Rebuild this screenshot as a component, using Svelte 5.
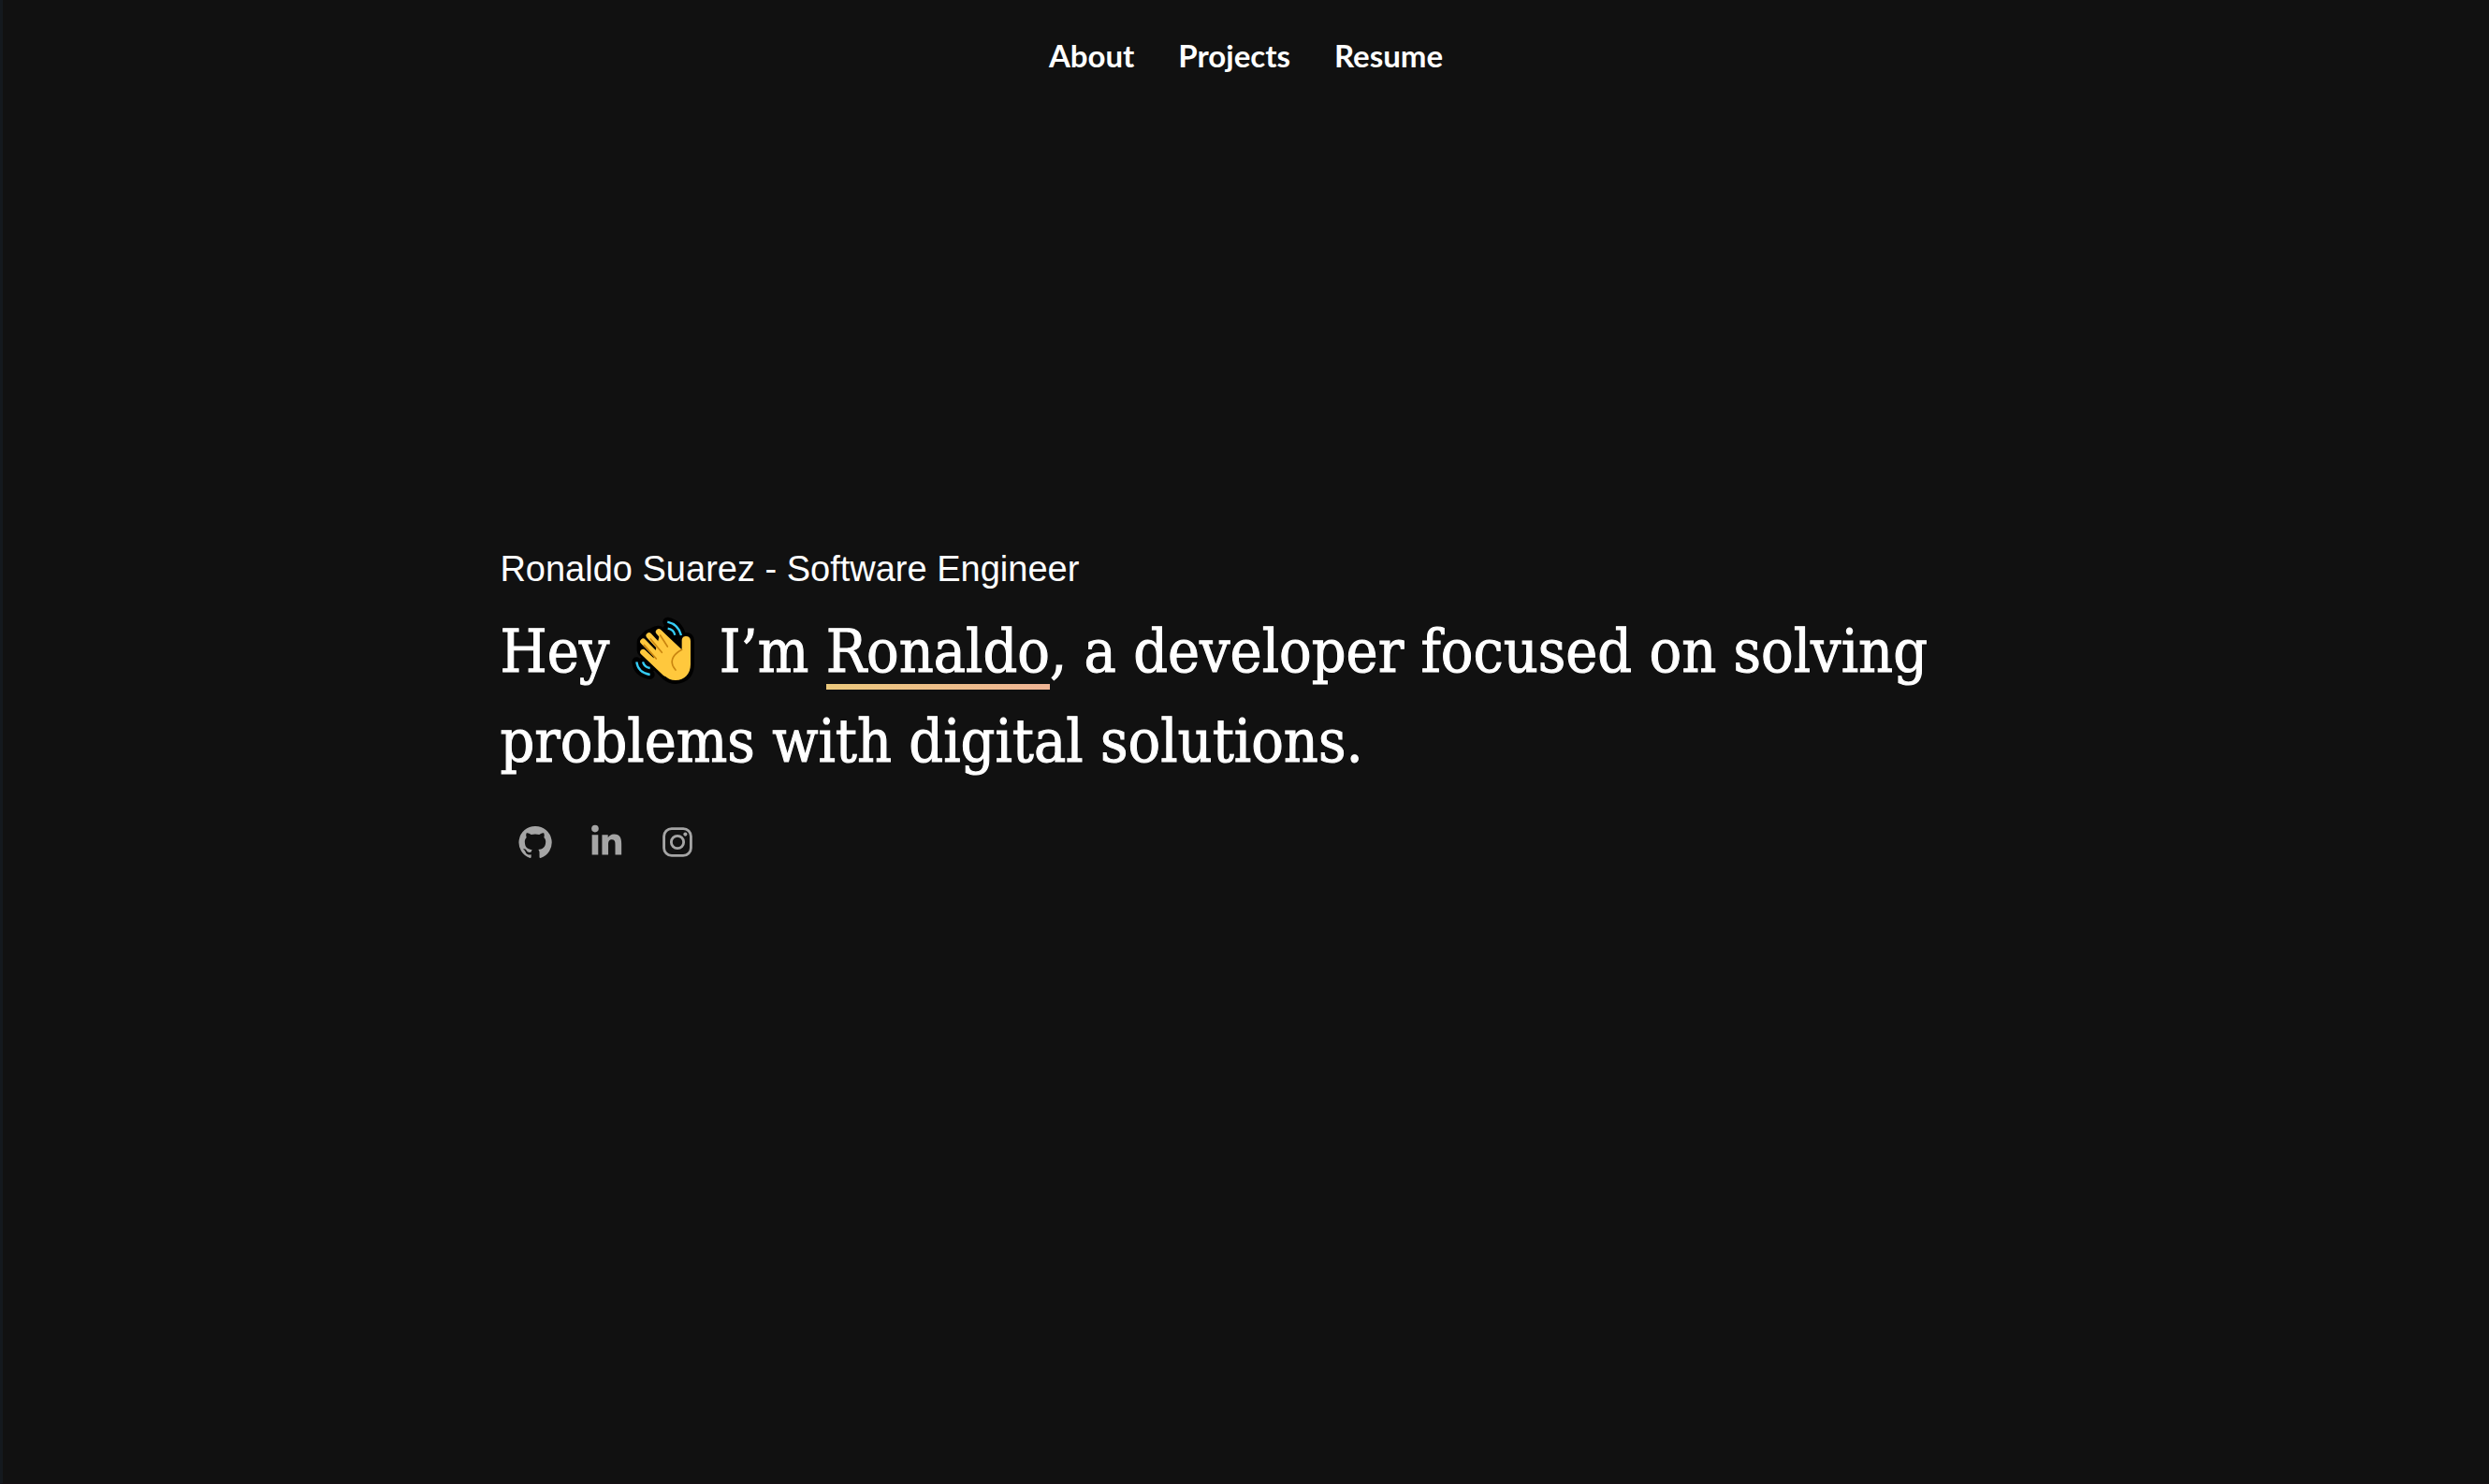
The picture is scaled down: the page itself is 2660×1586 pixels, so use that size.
<script>
  const nav = ['About', 'Projects', 'Resume'];
</script>

<div class="page">
  <header>
    <nav aria-label="Main">
      {#each nav as item}
        <a href={'#' + item.toLowerCase()}>{item}</a>
      {/each}
    </nav>
  </header>

  <main>
    <p class="role">Ronaldo Suarez - Software Engineer</p>
    <h1>
      Hey
      <svg class="wave" viewBox="42 24 204 225" role="img" aria-label="waving hand">
        <g fill="none" stroke="#000" stroke-width="30" stroke-linecap="round" stroke-linejoin="round">
          <path d="M157 44Q192 52 201 87M158 65Q177 68 181 86M58 172Q62 206 101 213M78 172Q83 189 101 192" />
          <path fill="#000" d="M129 76 120 78 98 88 79 107 79 135 155 212Q168 223 183 223 223 220 223 180V104Q223 97 217 98 210 97 211 104V145Z" stroke-width="40" />
        </g>
        <g fill="#ffc83d" stroke="#ffc83d" stroke-width="19" stroke-linecap="round" stroke-linejoin="round">
          <path d="M129 76 180 132M98 88 160 155M79 107 150 180M79 141 150 208" />
          <path stroke="none" d="M136 70 203 133V104C203 94 209 90 217 90S231 95 231 105V180C231 210 212 231 183 231 168 231 157 225 147 216L108 177Z" />
        </g>
        <path d="M134 87 157 123M103 99 139 142M82 118 121 162M203 133C180 146 166 163 174 184Q178 192 183 198" fill="none" stroke="#c98510" stroke-width="5" stroke-linecap="round" />
        <path d="M157 44Q192 52 201 87M158 65Q177 68 181 86M58 172Q62 206 101 213M78 172Q83 189 101 192" fill="none" stroke="#35ccf5" stroke-width="7" />
      </svg>
      I’m <span class="name">Ronaldo</span>, a developer focused on solving problems with digital solutions.
    </h1>
    <div class="social">
      <a href="#github" aria-label="GitHub">
        <svg viewBox="0 0 24 24"><path d="M12 1.27a11 11 0 00-3.48 21.46c.55.09.73-.28.73-.55v-1.84c-3.03.64-3.67-1.46-3.67-1.46-.55-1.29-1.28-1.65-1.28-1.65-.92-.65.1-.65.1-.65 1.1 0 1.73 1.1 1.73 1.1.92 1.65 2.57 1.2 3.21.92a2 2 0 01.64-1.47c-2.47-.27-5.04-1.19-5.04-5.5 0-1.1.46-2.1 1.2-2.84a3.76 3.76 0 010-2.93s.91-.28 3.11 1.1c1.8-.49 3.7-.49 5.5 0 2.1-1.38 3.02-1.1 3.02-1.1a3.76 3.76 0 01.1 2.93c.83.74 1.2 1.74 1.2 2.94 0 4.21-2.57 5.13-5.04 5.4.45.37.82.92.82 2.02v3.03c0 .27.1.64.73.55A11 11 0 0012 1.27" /></svg>
      </a>
      <a href="#linkedin" aria-label="LinkedIn">
        <svg viewBox="0 0 24 24"><circle cx="4.4" cy="2.9" r="2.4" /><path d="M2.3 7.1h4.2v13.4H2.3zM9.1 7.1h4v1.8h.1c.6-1 1.9-2.2 4-2.2 4.2 0 5 2.8 5 6.4v7.4H18v-6.6c0-1.6 0-3.6-2.2-3.6s-2.5 1.7-2.5 3.5v6.7H9.1z" /></svg>
      </a>
      <a href="#instagram" aria-label="Instagram">
        <svg viewBox="0 0 24 24"><g fill="none" stroke="currentColor" stroke-width="1.8"><rect x="2.9" y="2.9" width="18.2" height="18.2" rx="5.2" /><circle cx="12" cy="12" r="4.2" /></g><circle cx="17.3" cy="6.7" r="1.3" /></svg>
      </a>
    </div>
  </main>
</div>

<style>
  :global(body) {
    background: #111;
  }
  .page {
    box-sizing: border-box;
    min-height: 100vh;
    border-left: 3px solid #14191e;
    border-bottom: 1px solid #150f13;
    color: #fff;
  }
  header {
    display: flex;
    justify-content: center;
    padding: 40px 0;
  }
  nav {
    display: flex;
    gap: 47px;
  }
  nav a {
    color: inherit;
    text-decoration: none;
    font: 700 33px/38px Lato, sans-serif;
  }
  main {
    width: 60%;
    margin: 0 auto;
    padding-top: 466px;
  }
  .role {
    margin: 0;
    font: 38px/48px "Liberation Sans", Arial, sans-serif;
  }
  h1 {
    margin: 16px 0 0;
    font: 400 64px/96px "DejaVu Serif Condensed", "DejaVu Serif", serif;
    -webkit-text-stroke: 1px #fff;
  }
  .wave {
    width: 68px;
    height: 75px;
    margin: 0 8px 0 5px;
    vertical-align: -15px;
  }
  .name {
    background: linear-gradient(90deg, #ebc87c, #efb495) 0 100% / 100% 6px no-repeat;
    padding-bottom: 4px;
  }
  .social {
    display: flex;
    margin-top: 22px;
  }
  .social a {
    display: flex;
    padding: 19px;
    color: #a5a5a5;
  }
  .social svg {
    width: 38px;
    height: 38px;
    fill: currentColor;
  }
</style>
